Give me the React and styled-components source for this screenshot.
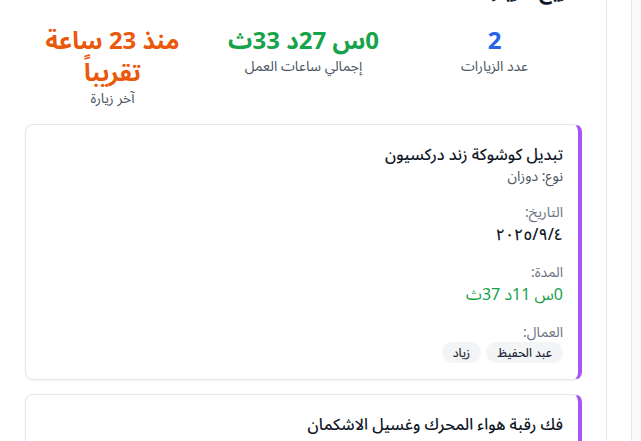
import React from "react";
import styled, { createGlobalStyle } from "styled-components";

const GlobalStyle = createGlobalStyle`
  html, body {
    margin: 0;
    padding: 0;
    height: 100%;
    overflow: hidden;
    background: #f9fafb;
  }
  body {
    font-family: "Noto Sans", "Noto Sans Arabic", "DejaVu Sans", sans-serif;
    color: #111827;
  }
  * { box-sizing: border-box; }
`;

const Layout = styled.div`
  display: flex;
  height: 441px;
  direction: ltr;
`;

const Panel = styled.main`
  width: 607px;
  flex: none;
  background: #ffffff;
  border-right: 1px solid #e5e7eb;
  padding: 0 24px 0 25px;
  direction: rtl;
  overflow: hidden;
`;

const Strip = styled.div`
  width: 25px;
  flex: none;
  background: #ffffff;
  border-right: 1px solid #e5e7eb;
`;

const Heading = styled.h2`
  margin: -24px 0 20px;
  padding-right: 0;
  font-size: 20px;
  line-height: 28px;
  font-weight: 700;
  color: #111827;
`;

const StatsGrid = styled.div`
  display: grid;
  grid-template-columns: repeat(3, 1fr);
  gap: 16px;
  text-align: center;
`;

const Stat = styled.div``;

const StatValue = styled.div`
  font-size: 24px;
  line-height: 32px;
  font-weight: 700;
  color: ${(p) => p.$color};
`;

const StatLabel = styled.div`
  font-size: 14px;
  line-height: 20px;
  color: #4b5563;
`;

const CardList = styled.div`
  margin-top: 16px;
  display: flex;
  flex-direction: column;
  gap: 14px;
`;

const Card = styled.article`
  background: #ffffff;
  border: 1px solid #e5e7eb;
  border-right: 4px solid #a855f7;
  border-radius: 8px;
  padding: 17px 15px 16px 16px;
  box-shadow: 0 1px 2px rgba(0, 0, 0, 0.05);
`;

const Title = styled.h3`
  margin: 0;
  font-size: 16px;
  line-height: 24px;
  font-weight: 500;
  color: #111827;
`;

const TypeLine = styled.div`
  font-size: 14px;
  line-height: 20px;
  color: #4b5563;
`;

const Field = styled.div`
  margin-top: 16px;
`;

const FieldLabel = styled.div`
  font-size: 14px;
  line-height: 20px;
  color: #6b7280;
`;

const FieldValue = styled.div`
  font-size: 16px;
  line-height: 24px;
  font-weight: ${(p) => (p.$bold ? 500 : 400)};
  color: ${(p) => p.$color || "#111827"};
`;

const Chips = styled.div`
  display: flex;
  flex-wrap: wrap;
  gap: 5px;
`;

const Chip = styled.span`
  display: inline-block;
  padding: 2px 11px;
  border-radius: 9999px;
  background: #f3f4f6;
  color: #1f2937;
  font-size: 12px;
  line-height: 17px;
  font-weight: 500;
`;

const visits = [
  {
    title: "تبديل كوشوكة زند دركسيون",
    type: "نوع: دوزان",
    date: "٤\u200F/٩\u200F/٢٠٢٥",
    duration: "0س 11د 37ث",
    workers: ["عبد الحفيظ", "زياد"],
  },
  {
    title: "فك رقبة هواء المحرك وغسيل الاشكمان",
    type: "نوع: كفالة 1",
    date: "٤\u200F/٩\u200F/٢٠٢٥",
    duration: "0س 15د 56ث",
    workers: ["عبد الحفيظ"],
  },
];

export default function App() {
  return (
    <>
      <GlobalStyle />
      <Layout>
        <Panel>
          <Heading>تاريخ الزيارات</Heading>
          <StatsGrid>
            <Stat>
              <StatValue $color="#2563eb">2</StatValue>
              <StatLabel>عدد الزيارات</StatLabel>
            </Stat>
            <Stat>
              <StatValue $color="#16a34a">0س 27د 33ث</StatValue>
              <StatLabel>إجمالي ساعات العمل</StatLabel>
            </Stat>
            <Stat>
              <StatValue $color="#ea580c">منذ 23 ساعة تقريباً</StatValue>
              <StatLabel>آخر زيارة</StatLabel>
            </Stat>
          </StatsGrid>
          <CardList>
            {visits.map((v, i) => (
              <Card key={i}>
                <Title>{v.title}</Title>
                <TypeLine>{v.type}</TypeLine>
                <Field>
                  <FieldLabel>التاريخ:</FieldLabel>
                  <FieldValue $bold>{v.date}</FieldValue>
                </Field>
                <Field>
                  <FieldLabel>المدة:</FieldLabel>
                  <FieldValue $color="#16a34a">{v.duration}</FieldValue>
                </Field>
                <Field>
                  <FieldLabel>العمال:</FieldLabel>
                  <Chips>
                    {v.workers.map((w) => (
                      <Chip key={w}>{w}</Chip>
                    ))}
                  </Chips>
                </Field>
              </Card>
            ))}
          </CardList>
        </Panel>
        <Strip />
      </Layout>
    </>
  );
}
